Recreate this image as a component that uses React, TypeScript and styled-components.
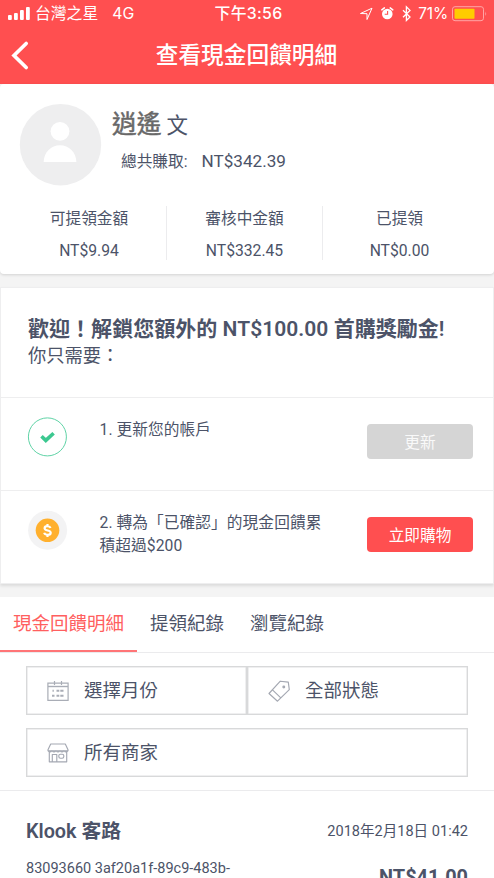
import React from "react";
import styled, { createGlobalStyle } from "styled-components";

const GlobalStyle = createGlobalStyle`
  * { box-sizing: border-box; }
  body {
    margin: 0;
    background: #f4f4f4;
    color: #4c5368;
    font-family: Roboto, "Noto Sans CJK TC", sans-serif;
    font-size: 15.7px;
    height: 878px;
    overflow: hidden;
  }
  button { font: inherit; padding: 0; margin: 0; background: none; border: 0; color: inherit; }
  h1, h2, p { margin: 0; font: inherit; }
  svg { display: block; flex: none; overflow: visible; }
`;

const Screen = styled.div`
  width: 494px;
  height: 878px;
  overflow: hidden;
  white-space: nowrap;
`;

const Header = styled.header`
  height: 84px;
  background: #ff4f50;
  color: #fff;
`;

const StatusBar = styled.div`
  display: grid;
  grid-template-columns: 1fr auto 1fr;
  align-items: center;
  height: 28px;
  padding: 0 6px 0 8px;
  font-family: Inter, "Noto Sans CJK TC", sans-serif;
  font-size: 15.8px;
  line-height: 20px;
`;

const StatusGroup = styled.div<{ $end?: boolean }>`
  display: flex;
  align-items: center;
  justify-content: ${(p) => (p.$end ? "flex-end" : "flex-start")};
`;

const Carrier = styled.span`
  margin: 0 14px 0 5px;
`;

const Clock = styled.span`
  padding-left: 1px;
  font-weight: 500;
  letter-spacing: 0.3px;
`;

const Percent = styled.span`
  margin: 0 4px 0 7px;
  font-size: 15.5px;
  letter-spacing: -0.2px;
`;

const TitleBar = styled.div`
  display: grid;
  grid-template-columns: 40px 1fr 40px;
  align-items: center;
  height: 56px;
`;

const BackButton = styled.button`
  padding-left: 10px;
`;

const Title = styled.h1`
  padding-right: 1px;
  text-align: center;
  font-size: 22.7px;
  font-weight: 500;
  line-height: 56px;
`;

const ProfileCard = styled.section`
  height: 190px;
  padding-top: 20px;
  background: #fff;
  border-radius: 4px;
  box-shadow: 0 1px 3px rgba(0, 0, 0, 0.14);
`;

const Profile = styled.div`
  display: flex;
  height: 102px;
  padding-left: 19px;
`;

const Name = styled.h2`
  margin: 6px 0 0 11px;
  display: flex;
  gap: 5px;
  font-size: 21.5px;
  line-height: 32px;
`;

const Surname = styled.span`
  font-size: 24.7px;
  line-height: 30px;
  color: #686868;
  -webkit-text-stroke: 0.5px #686868;
`;

const Earned = styled.p`
  display: flex;
  gap: 14px;
  margin: 9px 0 0 20px;
  line-height: 22px;
`;

const EarnedValue = styled.span`
  font-size: 17.1px;
  line-height: 21px;
`;

const Stats = styled.div`
  display: grid;
  grid-template-columns: 154px 156px 154px;
  margin: 0 12px;
`;

const Stat = styled.div`
  height: 54px;
  text-align: center;
  line-height: 26px;
  & + & { border-left: 1px solid #ececee; }
`;

const StatValue = styled.div`
  margin-top: 6px;
`;

const RewardCard = styled.section`
  height: 297px;
  margin-top: 13px;
  background: #fff;
  border: 1px solid #eeeeef;
  box-shadow: 0 2px 3px rgba(0, 0, 0, 0.1);
`;

const RewardIntro = styled.div`
  height: 109px;
  padding: 27px 0 0 27px;
`;

const RewardTitle = styled.h2`
  font-size: 21px;
  font-weight: 600;
  line-height: 28px;
  letter-spacing: 0.04px;
`;

const RewardHint = styled.p`
  font-size: 18.3px;
  line-height: 26px;
`;

const Step = styled.div`
  display: grid;
  grid-template-columns: 71px 1fr 106px;
  align-items: start;
  height: 93px;
  padding: 20px 20px 0 27px;
  border-top: 1px solid #eeeeef;
`;

const StepText = styled.p`
  padding-left: 0.5px;
  line-height: 23px;
  letter-spacing: 0.07px;
`;

const StepButton = styled.button<{ $disabled?: boolean }>`
  height: 35px;
  margin-top: 6px;
  border-radius: 4px;
  background: ${(p) => (p.$disabled ? "#d5d5d5" : "#ff4f50")};
  color: ${(p) => (p.$disabled ? "#f9f9f9" : "#fff")};
  line-height: 37px;
`;

const History = styled.section`
  height: 282px;
  margin-top: 13px;
  background: #fff;
`;

const Tabs = styled.nav`
  display: flex;
  height: 56px;
  border-bottom: 1px solid #ebebed;
`;

const Tab = styled.button<{ $active?: boolean }>`
  height: 55px;
  padding: 0 13px 4px;
  font-size: 18.5px;
  color: ${(p) => (p.$active ? "#ff5f60" : "#4c5368")};
  border-bottom: ${(p) => (p.$active ? "2px solid #ff7577" : "2px solid transparent")};
`;

const Filters = styled.div`
  display: grid;
  grid-template-columns: 221px 221px;
  align-content: start;
  row-gap: 13px;
  height: 138px;
  padding: 13px 26px 0;
  border-bottom: 1px solid #ebebed;
`;

const Filter = styled.button<{ $wide?: boolean }>`
  display: flex;
  align-items: center;
  gap: 15px;
  height: 49px;
  padding-left: 20px;
  grid-column: ${(p) => (p.$wide ? "span 2" : "auto")};
  border: 1px solid #d8d9da;
  box-shadow: inset 0 0 0 0.5px #dfe0e1;
  font-size: 18.5px;
`;

const FilterLabel = styled.span`
  padding-bottom: 3px;
`;

const Order = styled.article`
  display: flex;
  justify-content: space-between;
  padding: 25px 26px 0;
`;

const Merchant = styled.h2`
  font-size: 19.8px;
  font-weight: 600;
  line-height: 31px;
`;

const OrderId = styled.p`
  margin-top: 11px;
  font-size: 14.5px;
  line-height: 22px;
`;

const OrderEnd = styled.div`
  text-align: right;
`;

const OrderDate = styled.p`
  font-size: 14.55px;
  line-height: 31px;
`;

const Amount = styled.p`
  margin-top: 17px;
  font-size: 19.9px;
  font-weight: 700;
  line-height: 28px;
`;

const SignalIcon = () => (
  <svg width="22" height="15" viewBox="0 0 22 15" fill="#fff">
    <rect x="0" y="8" width="3.8" height="5" rx="1" />
    <rect x="6" y="6" width="3.8" height="7" rx="1" />
    <rect x="12" y="3" width="3.8" height="10" rx="1" />
    <rect x="18" y="0" width="3.8" height="13" rx="1" />
  </svg>
);

const StatusIcons = () => (
  <svg width="52" height="18" viewBox="0 0 52 18" fill="none">
    <path d="M1.5 8.5 13 3.2 8 14.5V8.7Z" stroke="#fff" strokeWidth="1" strokeLinejoin="round" />
    <circle cx="28.3" cy="9" r="5.3" fill="#fff" />
    <path d="M22.8 4.9 25.4 2.9M31.2 2.9l2.6 2" stroke="#fff" strokeWidth="1.5" strokeLinecap="round" />
    <path d="M28.6 6v3.3H25.7" stroke="#ff4f50" strokeWidth="1.1" />
    <path d="m44 5.2 7 6.8-3.6 3.5V1.9L51 5.4l-7 6.8" stroke="#fff" strokeWidth="1.3" />
  </svg>
);

const BatteryIcon = () => (
  <svg width="36" height="16" viewBox="0 0 36 16">
    <rect x=".5" y=".7" width="31" height="14" rx="2.5" fill="none" stroke="#ffa5a5" />
    <rect x="2.5" y="2.7" width="20" height="10" rx=".8" fill="#ffcc00" />
    <path d="M33.3 5.5Q35 7.7 33.3 10Z" fill="#ffa5a5" />
  </svg>
);

const BackIcon = () => (
  <svg width="20" height="30" viewBox="0 0 20 30">
    <path d="M16.2 2.5 4 14.5l12.2 12" fill="none" stroke="#fff" strokeWidth="3.7" strokeLinecap="round" />
  </svg>
);

const Avatar = () => (
  <svg width="82" height="82" viewBox="0 0 82 82">
    <circle cx="41.5" cy="40.7" r="40.7" fill="#eeeeef" />
    <circle cx="41" cy="27.3" r="9.4" fill="#fff" />
    <path d="M24.6 58C25 48 32 41.2 41 41.2S57 48 57.4 58Z" fill="#fff" />
  </svg>
);

const CheckIcon = () => (
  <svg width="40" height="40" viewBox="0 0 40 40" fill="none">
    <circle cx="19.4" cy="18.9" r="19" stroke="#5fd3a6" />
    <path d="m13.5 18.2 4.3 4.2 7.8-7.2" stroke="#3cc890" strokeWidth="3.6" />
  </svg>
);

const DollarIcon = () => (
  <svg width="40" height="40" viewBox="0 0 40 40">
    <circle cx="19.6" cy="19.3" r="19.5" fill="#f3f3f4" />
    <circle cx="19.5" cy="19.3" r="11.8" fill="#ffb02e" />
    <path d="M22.5 17C22.1 15.8 21 15.2 19.5 15.2c-1.7 0-2.9.8-2.9 2.1 0 3.1 6.1 1.4 6.1 4.4 0 1.4-1.4 2.1-3.2 2.1-1.6 0-2.9-.7-3.3-2M19.5 13v2.2m0 8.5V26" fill="none" stroke="#fff" strokeWidth="2.2" />
  </svg>
);

const CalendarIcon = () => (
  <svg width="22" height="22" viewBox="0 0 22 22" fill="none" stroke="#a9adb6">
    <path d="M.9 3.2h20.2v17.1H.9ZM7.5 1v4M14.5 1v4" strokeWidth="1.2" />
    <path d="M1 6.5h20" strokeWidth="1.4" />
    <path d="M5.5 10.7h1.3M9.5 10.7h2.8M13.3 10.7h3.2M5 15.7h2.5M9.5 15.7h2.8M13.3 15.7h3.2" strokeWidth="2" />
  </svg>
);

const TagIcon = () => (
  <svg width="22" height="22" viewBox="0 0 22 22" fill="none" stroke="#a4a8b2" strokeWidth="1.15" strokeLinejoin="round">
    <path d="M1 13.5 12.3 1.2l8 .9 1 7.5L9.5 21.2ZM4.5 9.8l8.3 8" />
    <circle cx="15.8" cy="6.9" r=".9" fill="#a4a8b2" />
  </svg>
);

const StoreIcon = () => (
  <svg width="22" height="20" viewBox="0 0 22 20" fill="none" stroke="#a4a8b2" strokeWidth="1.15" strokeLinejoin="round">
    <path d="M3.7 1h14.6L21 6.7v1H1v-1ZM1 7.7q2 2.6 4 0 2 2.6 4 0 2 2.6 4 0 2 2.6 4 0 2 2.6 4 0M2.3 9v9.8h17.4V9M5.3 18.5v-7h4.5v7" />
    <rect x="11.8" y="11.2" width="5" height="4" rx="1.6" />
  </svg>
);

export default function App() {
  return (
    <>
      <GlobalStyle />
      <Screen>
        <Header>
          <StatusBar>
            <StatusGroup>
              <SignalIcon />
              <Carrier>台灣之星</Carrier>
              <span>4G</span>
            </StatusGroup>
            <Clock>下午3:56</Clock>
            <StatusGroup $end>
              <StatusIcons />
              <Percent>71%</Percent>
              <BatteryIcon />
            </StatusGroup>
          </StatusBar>
          <TitleBar>
            <BackButton aria-label="返回"><BackIcon /></BackButton>
            <Title>查看現金回饋明細</Title>
          </TitleBar>
        </Header>

        <ProfileCard>
          <Profile>
            <Avatar />
            <div>
              <Name><Surname>逍遙</Surname><span>文</span></Name>
              <Earned><span>總共賺取:</span><EarnedValue>NT$342.39</EarnedValue></Earned>
            </div>
          </Profile>
          <Stats>
            <Stat>可提領金額<StatValue>NT$9.94</StatValue></Stat>
            <Stat>審核中金額<StatValue>NT$332.45</StatValue></Stat>
            <Stat>已提領<StatValue>NT$0.00</StatValue></Stat>
          </Stats>
        </ProfileCard>

        <RewardCard>
          <RewardIntro>
            <RewardTitle>歡迎！解鎖您額外的 NT$100.00 首購獎勵金!</RewardTitle>
            <RewardHint>你只需要：</RewardHint>
          </RewardIntro>
          <Step>
            <CheckIcon />
            <StepText>1. 更新您的帳戶</StepText>
            <StepButton $disabled>更新</StepButton>
          </Step>
          <Step>
            <DollarIcon />
            <StepText>2. 轉為「已確認」的現金回饋累<br />積超過$200</StepText>
            <StepButton>立即購物</StepButton>
          </Step>
        </RewardCard>

        <History>
          <Tabs>
            <Tab $active>現金回饋明細</Tab>
            <Tab>提領紀錄</Tab>
            <Tab>瀏覽紀錄</Tab>
          </Tabs>
          <Filters>
            <Filter><CalendarIcon /><FilterLabel>選擇月份</FilterLabel></Filter>
            <Filter><TagIcon /><FilterLabel>全部狀態</FilterLabel></Filter>
            <Filter $wide><StoreIcon /><FilterLabel>所有商家</FilterLabel></Filter>
          </Filters>
          <Order>
            <div>
              <Merchant>Klook 客路</Merchant>
              <OrderId>83093660 3af20a1f-89c9-483b-</OrderId>
            </div>
            <OrderEnd>
              <OrderDate>2018年2月18日 01:42</OrderDate>
              <Amount>NT$41.00</Amount>
            </OrderEnd>
          </Order>
        </History>
      </Screen>
    </>
  );
}
